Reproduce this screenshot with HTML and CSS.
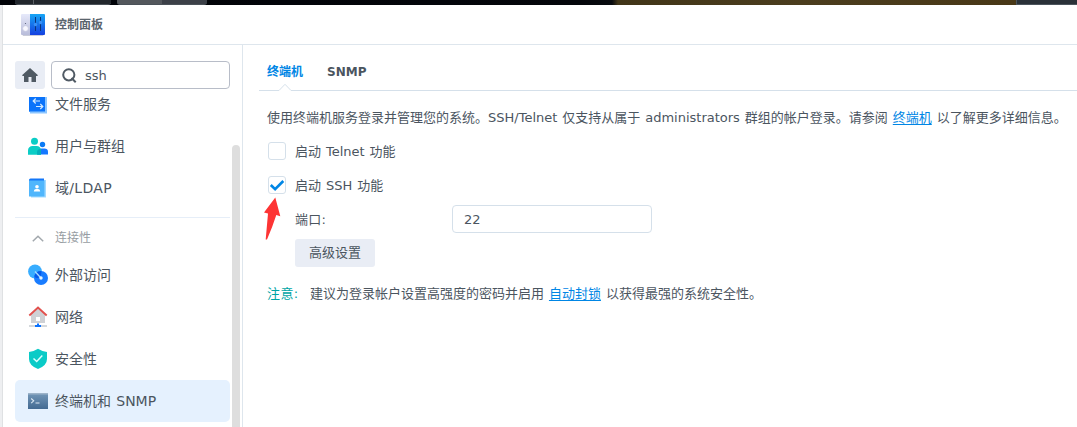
FILE: index.html
```html
<!DOCTYPE html>
<html lang="zh-CN">
<head>
<meta charset="utf-8">
<title>控制面板</title>
<link rel="stylesheet" href="styles.css">
</head>
<body>
<div class="desktop">
  <div class="desktop-left"><span class="task task-a"></span><span class="task task-b"></span></div>
  <div class="desktop-right"></div>
</div>
<div class="window">
  <header class="titlebar">
    <svg class="app-icon" width="24" height="24" viewBox="0 0 24 24">
      <defs>
        <linearGradient id="gp" x2="0" y2="1"><stop stop-color="#e6e9fa"/><stop offset="1" stop-color="#b8bcda"/></linearGradient>
        <linearGradient id="gb" x2="0" y2="1"><stop stop-color="#16a5f5"/><stop offset="1" stop-color="#1540e0"/></linearGradient>
      </defs>
      <path d="M1 21h22l-1 2H2z" fill="#c9cbd8"/>
      <path d="M1 1h8v21H1a1 1 0 0 1-1-1V2a1 1 0 0 1 1-1z" fill="url(#gp)"/>
      <path d="M9 1h14a1 1 0 0 1 1 1v19a1 1 0 0 1-1 1H9z" fill="url(#gb)"/>
      <path d="M14.500 4v14M19.500 4v14" stroke="#0a357d"/>
      <circle cx="14.500" cy="11.500" r="1.700" fill="#3a90f5"/><circle cx="19.500" cy="9.500" r="1.700" fill="#3a90f5"/>
      <circle cx="4.500" cy="10.500" r=".6" fill="#555b75"/>
      <circle cx="4.500" cy="15.500" r="2.800" fill="#f7f7ff" stroke="#c3c6dd" stroke-width=".6"/>
    </svg>
    <span>控制面板</span>
  </header>
  <div class="body">
    <aside class="sidebar">
      <div class="search-row">
        <div class="home"><svg width="16" height="14" viewBox="0 0 16 14"><path d="M8 0 0 7.200l.8.8H2v6h4.500V9h3v5H14V8h1.200l.8-.8z" fill="#505a64"/></svg></div>
        <div class="search"><svg width="15" height="15" viewBox="0 0 15 15" fill="none" stroke="#505a64" stroke-width="2"><circle cx="6.800" cy="6.800" r="5.600"/><path d="m9.500 10 4.200 4.200"/></svg><span>ssh</span></div>
      </div>
      <div class="list-area">
        <nav class="list">
          <div class="item first"><svg width="20" height="20" viewBox="0 0 20 20"><path d="M1 1h18v18.500H2V18H1z" fill="#8cc6ff"/><path d="M2.500 1H17v16.500H1V3z" fill="#0a73fa"/><path d="M12 7H5.500m2.200-2.500L5.200 7l2.500 2.500M8 12.500h6.500m-2.200-2.500 2.500 2.500-2.500 2.500" fill="none" stroke="#d4eaff" stroke-width="1.200"/></svg><span>文件服务</span></div>
          <div class="item"><svg width="20" height="20" viewBox="0 0 20 20"><circle cx="14.500" cy="8.500" r="2.700" fill="#0a7af5"/><path d="M10 18.500v-3c0-2 1.500-3 3.500-3h3c2 0 3.500 1 3.500 3v3z" fill="#1478ff"/><circle cx="6.500" cy="5.300" r="3.500" fill="#0bcdc6"/><path d="M0 18.800v-4.300c0-3 2-4.500 4.500-4.500h4c2.800 0 4.500 1.500 4.500 4.500v4.300z" fill="#0bcdc6"/><path d="M9 18.800v-3q0-2.500 3.500-3l.5 2v4z" fill="#04aebb"/></svg><span>用户与群组</span></div>
          <div class="item"><svg width="20" height="20" viewBox="0 0 20 20"><path d="M3 2h15v17.500H3z" fill="#a3daff"/><path d="M1 2q0-1.500 1.500-1.500H16V3H1z" fill="#1477f8"/><path d="M1 2.500h15.500v16H1z" fill="#50b6fc"/><circle cx="9" cy="8.700" r="1.800" fill="#fff"/><path d="M5.800 13.500q0-2.500 2-2.500h2.400q2 0 2 2.500z" fill="#fff"/></svg><span class="latin">域/LDAP</span></div>
          <div class="section"><svg width="12" height="7" viewBox="0 0 12 7"><path d="m.8 6.300 5.200-5 5.200 5" fill="none" stroke="#a2a8ad" stroke-width="1.500"/></svg><span>连接性</span></div>
          <div class="item"><svg width="20" height="22" viewBox="0 0 20 22"><circle cx="7" cy="7.500" r="6.900" fill="#38adff"/><circle cx="13" cy="14" r="7" fill="#197cff"/><path d="M6.300 12.200A7 7 0 0 1 13.300 7q.7 4.500-3.300 7-2 .6-3.700-1.800z" fill="#0759e8"/><path d="m7 7.500 5.500 6" stroke="#a9dcff" stroke-width="1.300"/><circle cx="13" cy="14" r="1.700" fill="#e7f5ff"/></svg><span>外部访问</span></div>
          <div class="item"><svg width="20" height="22" viewBox="0 0 20 22"><path d="M3 8 10 2l7 6v9H3z" fill="#cfd1d5"/><path d="m1.300 9.500 8.700-8 8.700 8" fill="none" stroke="#e2504d" stroke-width="1.900"/><path d="M8 11h4v4H8z" fill="#fff"/><path d="M1 20h18" stroke="#c6cbd1" stroke-width="1.500"/><path d="M9 17.500h2V19h2v2H7v-2h2z" fill="#0c73ff"/></svg><span>网络</span></div>
          <div class="item"><svg width="20" height="22" viewBox="0 0 20 22"><path d="M10 .8Q14 3.500 19 4v7q0 6.500-9 10-9-3.500-9-10V4Q6 3.500 10 .8z" fill="#0bcbc7"/><path d="m5.500 10.500 3.200 3 5.600-6" fill="none" stroke="#ddffff" stroke-width="1.500"/></svg><span>安全性</span></div>
          <div class="item active"><svg width="20" height="18" viewBox="0 0 20 18"><defs><linearGradient id="gt" x2="0" y2="1"><stop stop-color="#7397b8"/><stop offset="1" stop-color="#436a92"/></linearGradient></defs><path d="M0 1h20v16H0z" fill="url(#gt)"/><path d="M0 1h20v1.500H0z" fill="#9cb3c9"/><path d="m3.200 6.500 2.500 2.300-2.500 2.400M7.500 11h4" fill="none" stroke="#dbe8f3" stroke-width="1.100"/></svg><span>终端机和 SNMP</span></div>
        </nav>
        <div class="scroll-thumb"></div>
      </div>
    </aside>
    <main class="content">
      <div class="tabs">
        <div class="tab selected"><span>终端机</span><svg class="notch" width="14" height="8" viewBox="0 0 14 8"><path d="M1 7h12v1H1z" fill="#fff"/><path d="M0 7.500h1L7 1.300l6 6.200h1" fill="#fff" stroke="#d5e0ea"/></svg></div>
        <div class="tab">SNMP</div>
      </div>
      <div class="panel">
        <p class="intro">使用终端机服务登录并管理您的系统。SSH/Telnet 仅支持从属于 administrators 群组的帐户登录。请参阅 <a>终端机</a> 以了解更多详细信息。</p>
        <div class="check-row"><span class="checkbox"></span><span class="check-label">启动 Telnet 功能</span></div>
        <div class="check-row ssh"><span class="checkbox"><svg width="16" height="16" viewBox="0 0 16 16"><path d="m1.800 8 4.300 4.200 8.200-8.200" fill="none" stroke="#0086e5" stroke-width="2.600"/></svg></span><span class="check-label">启动 SSH 功能</span>
          <svg class="arrow" width="18" height="44" viewBox="0 0 18 44"><path d="m11.300.5 5 18.800-4-1.300Q8.500 30 3 42.500H1.700L4 16.500 0 15.500z" fill="#fd3434"/></svg>
        </div>
        <div class="port-row"><span class="port-label">端口:</span><div class="port-input">22</div></div>
        <div class="button">高级设置</div>
        <p class="note"><span class="note-label">注意:</span><span>建议为登录帐户设置高强度的密码并启用 <a>自动封锁</a> 以获得最强的系统安全性。</span></p>
      </div>
    </main>
  </div>
</div>
</body>
</html>
```
FILE: styles.css
```css
* { box-sizing: border-box; }
body {
  margin: 0;
  width: 1077px;
  height: 427px;
  overflow: hidden;
  display: flex;
  flex-direction: column;
  background: #eeeff1;
  color: #4b555f;
  font: 13px/20px "DejaVu Sans", "Noto Sans CJK SC", sans-serif;
  word-spacing: 0.8px;
  white-space: nowrap;
}
svg { display: block; flex: none; }
p { margin: 0; }

.desktop {
  flex: none;
  height: 5px;
  display: flex;
  justify-content: space-between;
  background: linear-gradient(90deg, #000207 0, #04060b 580px, #080b0f 612px, #413518 618px, #4b3d1e 800px, #493817 1010px);
}
.desktop-left { display: flex; gap: 6px; padding-left: 15px; }
.task { height: 5px; border-radius: 0 0 3px 3px; border-bottom: 1px solid #4a5158; }
.task-a { width: 96px; background: linear-gradient(90deg, #22272d 18px, #5b6066 18px 19px, #22272d 19px); }
.task-b { width: 90px; background: linear-gradient(90deg, #53575c 45px, #3c4048 45px); }
.desktop-right { width: 61px; background: #2a3138; border: solid #4b545c; border-width: 0 0 1px 1px; }

.window {
  flex: 1;
  min-height: 0;
  margin-left: 2px;
  border-left: 1px solid #dfe1e3;
  background: #fff;
  display: flex;
  flex-direction: column;
}
.titlebar {
  flex: none;
  height: 40px;
  border-bottom: 1px solid #dee6ed;
  display: flex;
  align-items: center;
  gap: 10px;
  padding-left: 18px;
  color: #5a646d;
  font-size: 12px;
  font-weight: bold;
}
.body { flex: 1; min-height: 0; display: flex; }

.sidebar {
  flex: none;
  width: 240px;
  border-right: 1px solid #dee6ed;
  display: flex;
  flex-direction: column;
}
.search-row { display: flex; gap: 6px; padding: 16px 12px 8px; }
.home {
  width: 30px;
  height: 28px;
  border-radius: 3px;
  background: #e9edf5;
  display: flex;
  align-items: center;
  justify-content: center;
}
.search {
  width: 179px;
  height: 28px;
  border: 1px solid #b8bdc8;
  border-radius: 4px;
  display: flex;
  align-items: center;
  gap: 8px;
  padding: 1px 0 0 10px;
}
.list-area { flex: 1; min-height: 0; display: flex; overflow: hidden; padding-left: 12px; }
.list { width: 215px; margin-top: -14px; font-size: 14px; }
.item {
  height: 42px;
  display: flex;
  align-items: center;
  gap: 7px;
  padding-left: 13px;
  border-radius: 5px;
}
.latin { letter-spacing: 0.3px; }
.active { background: #e5f1fe; }
.section {
  height: 37px;
  margin-top: 8px;
  border-top: 1px solid #e6eef8;
  display: flex;
  align-items: center;
  gap: 11px;
  padding: 4px 0 0 17px;
  color: #979da2;
  font-size: 12px;
}
.scroll-thumb { width: 8px; margin: 48px 0 0 2px; border-radius: 4px 4px 0 0; background: #dedede; }

.content { flex: 1; min-width: 0; padding-left: 16px; }
.tabs {
  height: 46px;
  border-bottom: 1px solid #d5e0ea;
  display: flex;
  gap: 24px;
  padding: 17px 0 0 8px;
  font-size: 12px;
  font-weight: bold;
}
.tab { position: relative; height: 28px; }
.selected { color: #0086e5; }
.notch { position: absolute; left: 11px; top: 21px; }
.panel { padding: 17px 0 0 8px; }
.panel a { color: #0086e5; text-decoration: underline; text-underline-offset: 2px; }
.intro { height: 20px; }
.check-row {
  height: 18px;
  margin: 14px 0 0 1px;
  display: flex;
  align-items: center;
  gap: 9px;
}
.check-label { padding-top: 2px; }
.ssh { margin-top: 16px; position: relative; }
.checkbox { width: 18px; height: 18px; border: 1px solid #d5e0ea; border-radius: 3px; background: #fff; }
.arrow { position: absolute; left: -4px; top: 21px; }
.port-row { display: flex; align-items: center; margin: 11px 0 0 28px; }
.port-label { width: 157px; padding-top: 1px; letter-spacing: 0.3px; }
.port-input {
  width: 200px;
  height: 28px;
  border: 1px solid #d5e0ea;
  border-radius: 4px;
  padding: 4px 11px;
  line-height: 19px;
}
.button {
  width: 80px;
  height: 28px;
  margin: 6px 0 0 28px;
  border-radius: 3px;
  background: #e9edf5;
  line-height: 28px;
  text-align: center;
}
.note { display: flex; gap: 11px; margin-top: 17px; }
.note-label { width: 32px; color: #00a5a5; letter-spacing: 0.4px; }
```
